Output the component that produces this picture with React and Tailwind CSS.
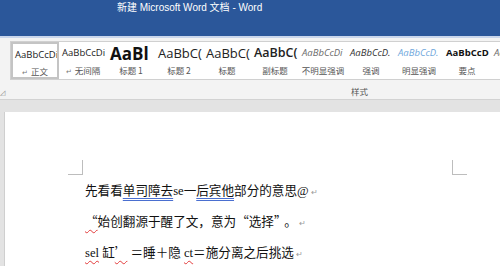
import React from "react";

const items = [
  { s: "AaBbCcDi", cls: "text-[9.5px] text-[#222]", label: "正文", mark: true, sel: true },
  { s: "AaBbCcDi", cls: "text-[9.5px] text-[#222]", label: "无间隔", mark: true },
  { s: "AaBl", cls: "text-[17px] font-bold text-[#111]", label: "标题 1" },
  { s: "AaBbC(", cls: "text-[13px] text-[#222]", label: "标题 2" },
  { s: "AaBbC(", cls: "text-[13px] text-[#222]", label: "标题" },
  { s: "AaBbC(", cls: "text-[12.5px] font-semibold text-[#222]", label: "副标题" },
  { s: "AaBbCcDi", cls: "text-[9.5px] italic text-[#6b6b6b]", label: "不明显强调" },
  { s: "AaBbCcD.", cls: "text-[9.5px] italic text-[#333]", label: "强调" },
  { s: "AaBbCcD.", cls: "text-[9.5px] italic text-[#6fa8dc]", label: "明显强调" },
  { s: "AaBbCcD", cls: "text-[9.5px] font-bold text-[#111]", label: "要点" },
  { s: "Aa", cls: "text-[9.5px] italic text-[#6b6b6b]", label: "" },
];

const cjk = "font-['Noto_Sans_CJK_SC',sans-serif]";
const red = "underline decoration-wavy decoration-[#e23b3b] decoration-1 underline-offset-[3px]";
const blue = "underline decoration-double decoration-[#4a6fd0] decoration-1 underline-offset-[3px]";
const Pm = () => <span className="text-[8px] text-[#9a9a9a] ml-[2px]">↵</span>;

export default function App() {
  return (
    <div className="w-[500px] h-[266px] overflow-hidden bg-[#e3e3e3] flex flex-col font-['Liberation_Sans','Noto_Sans_CJK_SC',sans-serif]">
      <div className="h-[36px] bg-[#2b579a] shrink-0 pl-[117px] pt-[1px] text-[10px] leading-[14px] text-white whitespace-nowrap">
        新建 Microsoft Word 文档 - Word
      </div>
      <div className="h-[2px] bg-[#c9d6ec] shrink-0" />
      <div className="h-[62px] shrink-0 bg-[#f3f3f3] border-b border-[#d2d2d2] flex flex-col">
        <div className="ml-[10px] mt-[3px] h-[39px] bg-white border border-[#d0d0d0] border-r-0 flex overflow-hidden">
          {items.map((it, i) => (
            <div
              key={i}
              className={`w-[48px] shrink-0 h-full flex flex-col items-center overflow-hidden ${it.sel ? "border-2 border-[#c4c4c4]" : ""}`}
            >
              <div className={`h-[23px] w-full flex items-center ${it.sel ? "pl-[2px]" : "pl-[3px]"} whitespace-nowrap overflow-hidden font-['Open_Sans','Liberation_Sans',sans-serif] ${it.cls}`}>
                {it.s}
              </div>
              <div className={`text-[8.5px] leading-[10px] text-[#555] whitespace-nowrap ${cjk}`}>
                {it.mark && <span className="text-[7px] text-[#777] mr-[3px]">↵</span>}
                {it.label}
              </div>
            </div>
          ))}
        </div>
        <div className="relative flex-1">
          <div className="absolute left-0 bottom-[3px] text-[7px] leading-[7px] text-[#888]">◿</div>
          <div className={`pl-[351px] pt-[6px] text-[8.5px] leading-[10px] text-[#555] ${cjk}`}>样式</div>
        </div>
      </div>
      <div className="h-[12px] shrink-0" />
      <div className="flex-1 ml-[4px] border-l border-[#cfcfcf] bg-white">
        <div className="pt-[48px] pl-[63px] flex">
          <div className="w-[15px] h-[15px] border-r border-b border-[#bdbdbd]" />
          <div className="w-[369px]" />
          <div className="w-[15px] h-[15px] border-l border-b border-[#bdbdbd]" />
        </div>
        <div className="pl-[80px] pt-[2px] text-[12.6px] leading-[28px] text-[#111] whitespace-nowrap font-['Liberation_Serif','Noto_Sans_CJK_SC',serif]">
          <div>
            先看看<span className={blue}>单司障去</span>se一<span className={blue}>后宾他</span>部分的意思@<Pm />
          </div>
          <div>
            <span className={`${red} ${cjk}`}>“</span>始创翻源于醒了文，意为<span className={cjk}>“</span>选择<span className={`${cjk} mr-[4px]`}>”</span>。<Pm />
          </div>
          <div>
            <span className={red}>sel</span> 缸<span className={`${red} ${cjk}`}>’</span> ＝睡＋隐 <span className={red}>ct</span>＝施分离之后挑选<Pm />
          </div>
        </div>
      </div>
    </div>
  );
}
